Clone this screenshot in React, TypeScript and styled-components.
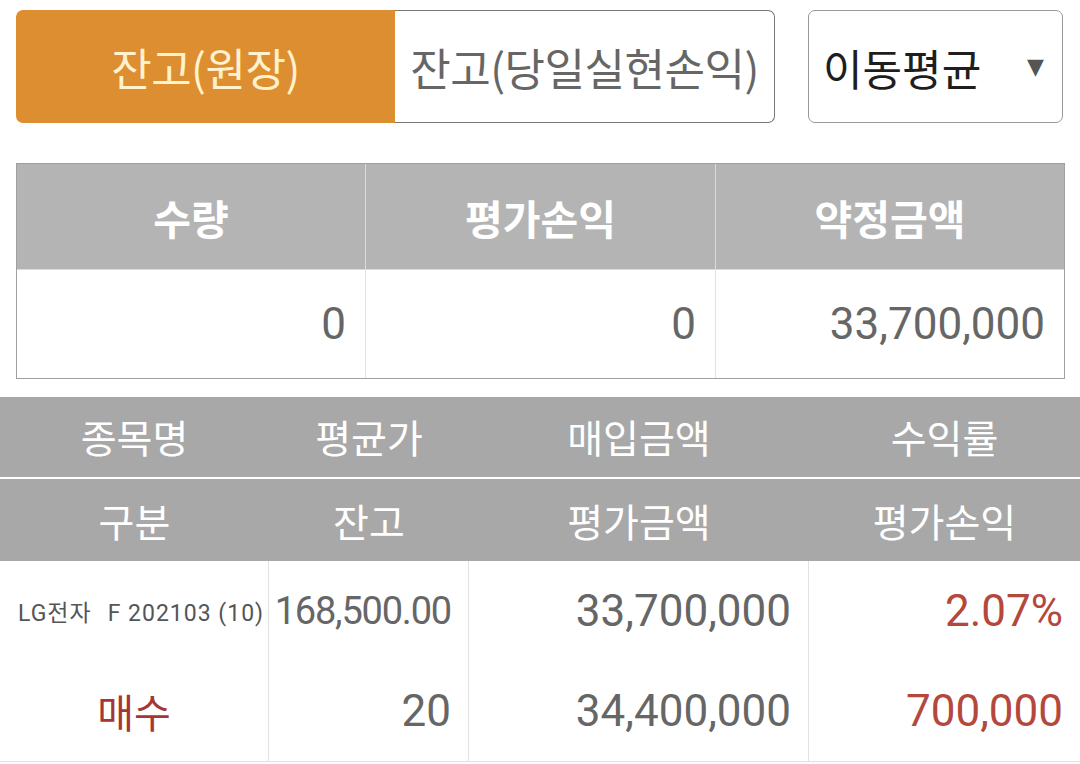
import React from "react";
import styled, { createGlobalStyle } from "styled-components";

const Global = createGlobalStyle`
  html, body { margin: 0; padding: 0; background: #ffffff; }
  body { font-family: Roboto, "Noto Sans CJK KR", sans-serif; }
  * { box-sizing: border-box; }
`;

const Page = styled.div`
  width: 1080px;
  height: 764px;
  overflow: hidden;
  display: flex;
  flex-direction: column;
`;

const TopBar = styled.div`
  display: flex;
  padding: 10px 17px 0 16px;
  gap: 33px;
  height: 123px;
`;

const Segmented = styled.div`
  display: flex;
  width: 759px;
  height: 113px;
`;

const SegButton = styled.div<{ $active?: boolean }>`
  flex: 1;
  display: flex;
  align-items: center;
  justify-content: center;
  font-family: "Noto Sans CJK KR", sans-serif;
  font-size: 44px;
  letter-spacing: -0.5px;
  background: ${(p) => (p.$active ? "#DD8E31" : "#ffffff")};
  color: ${(p) => (p.$active ? "#FFF2CC" : "#666666")};
  border: ${(p) => (p.$active ? "none" : "1px solid #777777")};
  border-left: none;
  border-radius: ${(p) => (p.$active ? "7px 0 0 7px" : "0 7px 7px 0")};
`;

const Select = styled.div`
  flex: 1;
  height: 113px;
  display: flex;
  align-items: center;
  justify-content: space-between;
  padding: 0 18px 0 14px;
  border: 1px solid #999999;
  border-radius: 7px;
  font-family: "Noto Sans CJK KR", sans-serif;
  font-size: 43px;
  color: #1e1e1e;
`;

const Arrow = styled.span`
  font-size: 22px;
  color: #555555;
  font-family: "DejaVu Sans", sans-serif;
`;

const Summary = styled.div`
  margin: 40px 15px 0 16px;
  border: 1px solid #a0a0a0;
  display: grid;
  grid-template-columns: 349px 350px 1fr;
`;

const SumHead = styled.div<{ $last?: boolean }>`
  height: 106px;
  background: #b4b4b4;
  color: #ffffff;
  font-family: "Noto Sans CJK KR", sans-serif;
  font-weight: 700;
  font-size: 41px;
  display: flex;
  align-items: center;
  justify-content: center;
  border-right: ${(p) => (p.$last ? "none" : "1px solid #dcdcdc")};
  border-bottom: 1px solid #dcdcdc;
`;

const SumCell = styled.div<{ $last?: boolean }>`
  height: 108px;
  display: flex;
  align-items: center;
  justify-content: flex-end;
  padding-right: 19px;
  font-family: Roboto, sans-serif;
  font-size: 44px;
  color: #666666;
  border-right: ${(p) => (p.$last ? "none" : "1px solid #e2e2e2")};
`;

const List = styled.div`
  margin-top: 18px;
  display: grid;
  grid-template-columns: 269px 200px 340px 1fr;
`;

const ListHead = styled.div<{ $top?: boolean }>`
  height: 82px;
  background: #a8a8a8;
  color: #ffffff;
  font-family: "Noto Sans CJK KR", sans-serif;
  font-size: 39px;
  display: flex;
  align-items: center;
  justify-content: center;
  border-bottom: ${(p) => (p.$top ? "2px solid #ffffff" : "none")};
  padding-bottom: ${(p) => (p.$top ? "2px" : "0")};
`;

const Cell = styled.div<{
  $align?: "left" | "center" | "right";
  $color?: string;
  $size?: number;
  $bottom?: boolean;
  $last?: boolean;
  $tight?: boolean;
}>`
  height: ${(p) => (p.$bottom ? "101px" : "100px")};
  display: flex;
  align-items: center;
  justify-content: ${(p) =>
    p.$align === "left" ? "flex-start" : p.$align === "center" ? "center" : "flex-end"};
  padding: ${(p) => (p.$align === "left" ? "0 0 0 18px" : p.$align === "center" ? "0" : "0 17px 0 0")};
  font-family: Roboto, "Noto Sans CJK KR", sans-serif;
  font-size: ${(p) => p.$size ?? 44}px;
  letter-spacing: ${(p) => (p.$tight ? "-1.2px" : "0")};
  color: ${(p) => p.$color ?? "#666666"};
  border-right: ${(p) => (p.$last ? "none" : "1px solid #e2e2e2")};
  border-bottom: ${(p) => (p.$bottom ? "1px solid #e2e2e2" : "none")};
  white-space: nowrap;
`;

const Small = styled.span`
  font-family: Roboto, "Noto Sans CJK KR", sans-serif;
  font-size: 23px;
  color: #555555;
  letter-spacing: 1px;
`;

const Gap = styled.span`
  display: inline-block;
  width: 16px;
`;

export default function App() {
  return (
    <Page>
      <Global />
      <TopBar>
        <Segmented>
          <SegButton $active>잔고(원장)</SegButton>
          <SegButton>잔고(당일실현손익)</SegButton>
        </Segmented>
        <Select>
          <span>이동평균</span>
          <Arrow>▼</Arrow>
        </Select>
      </TopBar>

      <Summary>
        <SumHead>수량</SumHead>
        <SumHead>평가손익</SumHead>
        <SumHead $last>약정금액</SumHead>
        <SumCell>0</SumCell>
        <SumCell>0</SumCell>
        <SumCell $last>33,700,000</SumCell>
      </Summary>

      <List>
        <ListHead $top>종목명</ListHead>
        <ListHead $top>평균가</ListHead>
        <ListHead $top>매입금액</ListHead>
        <ListHead $top>수익률</ListHead>
        <ListHead>구분</ListHead>
        <ListHead>잔고</ListHead>
        <ListHead>평가금액</ListHead>
        <ListHead>평가손익</ListHead>

        <Cell $align="left">
          <Small>
            LG전자<Gap />F 202103 (10)
          </Small>
        </Cell>
        <Cell $size={38} $tight>168,500.00</Cell>
        <Cell>33,700,000</Cell>
        <Cell $last $color="#B5483C">2.07%</Cell>

        <Cell $align="center" $bottom $size={40} $color="#A83535">매수</Cell>
        <Cell $bottom>20</Cell>
        <Cell $bottom>34,400,000</Cell>
        <Cell $bottom $last $color="#B5483C">700,000</Cell>
      </List>
    </Page>
  );
}
